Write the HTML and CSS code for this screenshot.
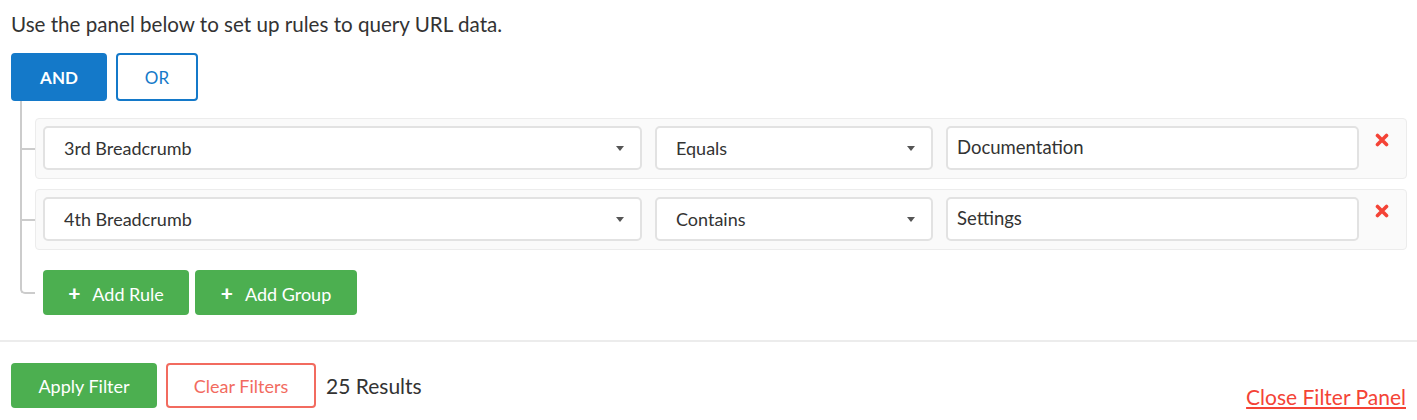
FILE: index.html
```html
<!DOCTYPE html>
<html>
<head>
    <meta charset="UTF-8">
    <link rel="stylesheet" href="styles.css">
</head>
<body>
    <div id="builder">
        <p class="intro">Use the panel below to set up rules to query URL data.</p>

        <div class="conditions">
            <button class="cond active">AND</button>
            <button class="cond">OR</button>
        </div>

        <div class="tree">
            <div class="node first">
                <div class="tick"></div>
                <div class="rule">
                    <div class="select field">3rd Breadcrumb<span class="caret"></span></div>
                    <div class="select operator">Equals<span class="caret"></span></div>
                    <input class="value" type="text" value="Documentation">
                    <button class="remove" title="Remove rule">
                        <svg width="14" height="14" viewBox="0 0 14 14"><path d="M2.5 2.5 L11.5 11.5 M11.5 2.5 L2.5 11.5" stroke="#f44336" stroke-width="3.6" stroke-linecap="round"/></svg>
                    </button>
                </div>
            </div>
            <div class="node">
                <div class="tick"></div>
                <div class="rule">
                    <div class="select field">4th Breadcrumb<span class="caret"></span></div>
                    <div class="select operator">Contains<span class="caret"></span></div>
                    <input class="value" type="text" value="Settings">
                    <button class="remove" title="Remove rule">
                        <svg width="14" height="14" viewBox="0 0 14 14"><path d="M2.5 2.5 L11.5 11.5 M11.5 2.5 L2.5 11.5" stroke="#f44336" stroke-width="3.6" stroke-linecap="round"/></svg>
                    </button>
                </div>
            </div>
            <div class="node last">
                <div class="elbow"></div>
                <div class="adders">
                    <button class="btn green add"><span class="plus">+</span>Add Rule</button>
                    <button class="btn green add group"><span class="plus">+</span>Add Group</button>
                </div>
            </div>
        </div>
    </div>

    <div id="footer">
        <div class="actions">
            <button class="btn green apply">Apply Filter</button>
            <button class="btn outline clear">Clear Filters</button>
            <span class="count">25 Results</span>
        </div>
        <a class="close" href="#">Close Filter Panel</a>
    </div>
</body>
</html>
```

FILE: styles.css
```css
body {
    margin: 0;
    font-family: Lato, "Open Sans", sans-serif;
    color: #333;
    background: #fff;
}
button {
    font-family: inherit;
    cursor: pointer;
}
#builder {
    padding: 0 10px 0 11px;
    border-bottom: 2px solid #ececec;
}
.intro {
    margin: 0;
    padding-top: 11px;
    font-size: 20.6px;
    line-height: 26px;
}
.conditions {
    display: flex;
    gap: 9px;
    margin-top: 16px;
}
.cond {
    height: 48px;
    border: 2px solid #1479c9;
    border-radius: 4px;
    background: #fff;
    color: #1479c9;
    font-size: 17px;
    padding: 0;
    width: 82px;
}
.cond.active {
    width: 96px;
    background: #1479c9;
    color: #fff;
    font-weight: bold;
}
.tree {
    margin-left: 9px;
    padding-bottom: 25px;
}
.node {
    display: flex;
    align-items: center;
    border-left: 2px solid #ccc;
    padding: 5px 0;
}
.node.first {
    padding-top: 17px;
}
.node.last {
    border-left: none;
    align-items: flex-start;
    padding: 0;
}
.tick {
    width: 13px;
    flex: none;
    border-top: 2px solid #ccc;
}
.elbow {
    width: 13px;
    height: 37px;
    flex: none;
    border-left: 2px solid #ccc;
    border-bottom: 2px solid #ccc;
    border-bottom-left-radius: 5px;
    margin-right: 8px;
}
.rule {
    flex: 1;
    display: flex;
    align-items: flex-start;
    gap: 13px;
    padding: 7px 7px 8px 7px;
    background: #fafafa;
    border: 1px solid #ececec;
    border-radius: 4px;
}
.select {
    height: 44px;
    box-sizing: border-box;
    display: flex;
    align-items: center;
    justify-content: space-between;
    padding: 0 16px 0 19px;
    background: #fff;
    border: 2px solid #e2e2e2;
    border-radius: 5px;
    font-size: 18px;
    color: #333;
}
.field {
    width: 599px;
    flex: none;
}
.operator {
    width: 278px;
    flex: none;
}
.caret {
    width: 0;
    height: 0;
    border-left: 4.5px solid transparent;
    border-right: 4.5px solid transparent;
    border-top: 5px solid #555;
}
.value {
    width: 413px;
    height: 44px;
    box-sizing: border-box;
    flex: none;
    margin: 0;
    padding: 0 9px 3px;
    border: 2px solid #e2e2e2;
    border-radius: 5px;
    font-family: inherit;
    font-size: 18.5px;
    color: #333;
    background: #fff;
}
.remove {
    border: none;
    background: none;
    padding: 0;
    margin: 7px 0 0 3px;
    width: 14px;
    height: 14px;
    display: flex;
}
.adders {
    display: flex;
    gap: 6px;
    padding-top: 15px;
}
.btn {
    height: 45px;
    border: none;
    border-radius: 4px;
    font-size: 18px;
    padding: 0;
}
.green {
    background: #4caf50;
    color: #fff;
}
.add {
    width: 146px;
}
.add.group {
    width: 162px;
}
.plus {
    font-weight: 900;
    font-size: 21px;
    margin-right: 12px;
}
#footer {
    display: flex;
    justify-content: space-between;
    align-items: flex-end;
    padding: 21px 11px 11px 11px;
}
.actions {
    display: flex;
    align-items: center;
    gap: 9px;
}
.apply {
    width: 146px;
}
.outline {
    width: 150px;
    background: #fff;
    border: 2px solid #f26b5f;
    color: #f26b5f;
}
.count {
    font-size: 21px;
    margin-left: 1px;
}
.close {
    font-size: 21px;
    color: #f44336;
    line-height: 22px;
}
```
